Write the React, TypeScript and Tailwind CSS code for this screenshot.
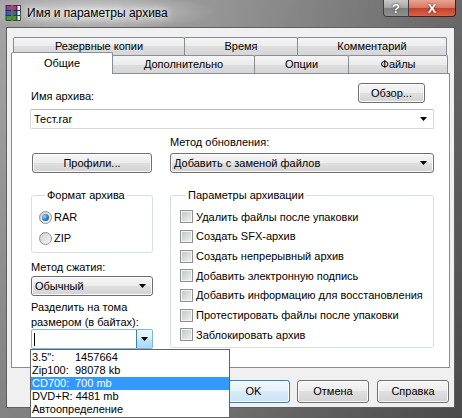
import type { ReactNode } from 'react';

const BTN_BG =
  'bg-[linear-gradient(#f6f6f6_0%,#ececec_50%,#dfdfdf_50%,#d3d3d3_100%)]';

function Arrow() {
  return (
    <svg width="7" height="4" viewBox="0 0 7 4" aria-hidden>
      <path d="M0 0H7L3.5 4Z" fill="#000" />
    </svg>
  );
}

function RarIcon() {
  // stacked books logo
  return (
    <svg width="17" height="18" viewBox="0 0 17 18" aria-hidden>
      <rect x="1" y="1.5" width="11" height="5" fill="#9b3c9a" stroke="#3a1a3a" strokeWidth="0.8" />
      <rect x="12" y="1.5" width="3.5" height="5" fill="#efe7cf" stroke="#3a1a3a" strokeWidth="0.8" />
      <rect x="1" y="6.5" width="11" height="5" fill="#2f63b6" stroke="#14284d" strokeWidth="0.8" />
      <rect x="12" y="6.5" width="3.5" height="5" fill="#efe7cf" stroke="#14284d" strokeWidth="0.8" />
      <rect x="1" y="11.5" width="11" height="5" fill="#3c9b45" stroke="#173d1b" strokeWidth="0.8" />
      <rect x="12" y="11.5" width="3.5" height="5" fill="#efe7cf" stroke="#173d1b" strokeWidth="0.8" />
      <rect x="6" y="1" width="2.5" height="16" fill="#8a6a2a" opacity="0.85" />
    </svg>
  );
}

function Button({
  children,
  className = '',
  primary = false,
}: {
  children: ReactNode;
  className?: string;
  primary?: boolean;
}) {
  return (
    <div
      className={`flex items-center justify-center rounded-[3px] border text-[11px] leading-none shadow-[inset_0_0_0_1px_rgba(255,255,255,0.85)] ${
        primary
          ? 'border-[#3c7fb1] bg-[linear-gradient(#f2f8fd_0%,#e6f2fb_50%,#d7ebf9_50%,#cbe4f6_100%)]'
          : `border-[#707070] ${BTN_BG}`
      } ${className}`}
    >
      {children}
    </div>
  );
}

function Select({ value, className = '' }: { value: string; className?: string }) {
  return (
    <div
      className={`flex h-[20px] items-center justify-between rounded-[3px] border border-[#707070] pl-[3px] pr-[6px] text-[11px] shadow-[inset_0_0_0_1px_rgba(255,255,255,0.85)] ${BTN_BG} ${className}`}
    >
      <span>{value}</span>
      <Arrow />
    </div>
  );
}

function Radio({ label, checked = false }: { label: string; checked?: boolean }) {
  return (
    <div className="flex h-[16px] items-center gap-[2px]">
      <span className="flex h-[13px] w-[13px] items-center justify-center rounded-full border border-[#8e8f8f] bg-[linear-gradient(135deg,#cfcfcf,#f7f7f7)]">
        {checked && (
          <span className="h-[7px] w-[7px] rounded-full bg-[radial-gradient(circle_at_35%_35%,#9ad6ff,#2a78bd_55%,#1a4b7c)]" />
        )}
      </span>
      <span>{label}</span>
    </div>
  );
}

function Check({ label }: { label: string }) {
  return (
    <div className="flex h-[19.7px] items-center gap-[3px]">
      <span className="flex h-[13px] w-[13px] items-center justify-center border border-[#8e8f8f] bg-[#f4f4f4]">
        <span className="h-[9px] w-[9px] bg-[linear-gradient(135deg,#c4c6c8,#eeeeee)]" />
      </span>
      <span>{label}</span>
    </div>
  );
}

const TAB =
  'flex h-[18px] items-center justify-center rounded-t-[2px] border border-b-0 border-[#898c95] bg-[linear-gradient(#f5f5f5,#ebebeb_50%,#dedede_50%,#d6d6d6)]';

export default function App() {
  return (
    <div className="relative flex h-[418px] w-[462px] flex-col overflow-hidden bg-[linear-gradient(180deg,transparent_0%,transparent_8%,rgba(0,0,0,0.18)_100%),linear-gradient(100deg,#a2a2a2_0%,#969696_40%,#727272_75%,#5a5a5a_100%)] font-['Liberation_Sans',Arial,sans-serif] text-black">
      {/* title bar */}
      <div className="flex h-[27px] items-start bg-[radial-gradient(ellipse_120px_20px_at_95px_12px,rgba(255,255,255,0.55),transparent)]">
        <div className="ml-[5px] mt-[4px]">
          <RarIcon />
        </div>
        <div className="ml-[5px] mt-[6px] text-[12px] leading-[14px] [text-shadow:0_0_6px_#fff,0_0_10px_#fff]">
          Имя и параметры архива
        </div>
        <div className="ml-auto mr-[6px] flex h-[17px]">
          <div className="flex w-[26px] items-center justify-center rounded-bl-[4px] border border-t-0 border-[#3d3d3d] bg-[linear-gradient(#c8c8c8,#a3a3a3_50%,#7e7e7e_50%,#909090)] text-[13px] font-bold leading-none text-white [text-shadow:0_0_2px_#222]">
            ?
          </div>
          <div className="flex w-[47px] items-center justify-center rounded-br-[4px] border border-l-0 border-t-0 border-[#4a1d16] bg-[linear-gradient(#e9a493,#d77562_50%,#c2402a_50%,#d5654a)] text-[13px] font-bold leading-none text-white [text-shadow:0_0_2px_#4a0a00]">
            X
          </div>
        </div>
      </div>

      <div className="flex">
        <div className="w-[6px]" />
        {/* client area */}
        <div className="flex h-[381px] w-[449px] flex-col border border-[#5f5f5f] bg-[#f0f0f0] px-[4px] pt-[9px] text-[11px]">
          {/* tabs */}
          <div className="ml-[2px] flex">
            <div className={`${TAB} w-[172px]`}>Резервные копии</div>
            <div className={`${TAB} -ml-px w-[114px]`}>Время</div>
            <div className={`${TAB} -ml-px w-[150px]`}>Комментарий</div>
          </div>
          <div className="flex h-[18px] items-end">
            <div className="relative z-10 -mb-px flex h-[22px] w-[102px] items-center justify-center rounded-t-[2px] border border-b-0 border-[#898c95] bg-white">
              Общие
            </div>
            <div className={`${TAB} -ml-px w-[143px]`}>Дополнительно</div>
            <div className={`${TAB} -ml-px w-[95px]`}>Опции</div>
            <div className={`${TAB} -ml-px w-[100px]`}>Файлы</div>
          </div>

          {/* tab page */}
          <div className="flex h-[295px] flex-col border border-[#898c95] bg-white pl-[19px] pr-[15px] pt-[9px]">
            <div className="flex h-[20px] items-end justify-between">
              <span className="leading-[14px]">Имя архива:</span>
              <Button className="mr-[9px] h-[20px] w-[67px]">Обзор...</Button>
            </div>
            <div className="-ml-px mt-[6px] flex h-[20px] items-center justify-between rounded-[2px] border border-[#d9d9d9] border-t-[#b5b8bd] bg-white pl-[3px] pr-[6px]">
              <span>Тест.rar</span>
              <Arrow />
            </div>

            <div className="flex justify-between">
              {/* left column */}
              <div className="flex w-[122px] flex-col">
                <Button className="ml-px mt-[24px] h-[20px] w-[120px]">Профили...</Button>
                <fieldset className="mt-[15px] h-[65px] rounded-[3px] border border-[#d5dfe5] pl-[7px]">
                  <legend className="ml-[6px] px-[2px] leading-[14px]">Формат архива</legend>
                  <div className="mt-[7px]">
                    <Radio label="RAR" checked />
                  </div>
                  <div className="mt-[5px]">
                    <Radio label="ZIP" />
                  </div>
                </fieldset>
                <span className="mt-[7px] leading-[14px]">Метод сжатия:</span>
                <Select value="Обычный" className="mt-[2px]" />
                <span className="mt-[4px] leading-[15px]">
                  Разделить на тома
                  <br />
                  размером (в байтах):
                </span>
                <div className="-mt-px flex h-[20px] rounded-[2px] border border-[#7eb4ea] bg-white">
                  <div className="flex flex-1 items-center pl-[2px]">
                    <span className="h-[13px] w-px bg-black" />
                  </div>
                  <div className="flex w-[16px] items-center justify-center border-l border-[#3c7fb1] bg-[linear-gradient(#eaf6fd,#d9f0fc_50%,#bee6fd_50%,#a7d9f5)]">
                    <Arrow />
                  </div>
                </div>
              </div>

              {/* right column */}
              <div className="flex w-[264px] flex-col">
                <span className="mt-[6px] leading-[14px]">Метод обновления:</span>
                <Select value="Добавить с заменой файлов" className="mt-[4px]" />
                <fieldset className="mt-[15px] h-[160px] rounded-[3px] border border-[#d5dfe5] pl-[9px]">
                  <legend className="ml-[6px] px-[2px] leading-[14px]">Параметры архивации</legend>
                  <div className="mt-[5px] flex flex-col">
                    <Check label="Удалить файлы после упаковки" />
                    <Check label="Создать SFX-архив" />
                    <Check label="Создать непрерывный архив" />
                    <Check label="Добавить электронную подпись" />
                    <Check label="Добавить информацию для восстановления" />
                    <Check label="Протестировать файлы после упаковки" />
                    <Check label="Заблокировать архив" />
                  </div>
                </fieldset>
              </div>
            </div>
          </div>

          {/* dialog buttons */}
          <div className="mr-px mt-[12px] flex justify-end gap-[7px]">
            <Button primary className="h-[23px] w-[73px]">
              OK
            </Button>
            <Button className="h-[23px] w-[72px]">Отмена</Button>
            <Button className="ml-px h-[23px] w-[72px]">Справка</Button>
          </div>
        </div>
        <div className="w-[7px]" />
      </div>

      {/* open drop-down list of the volume size combo */}
      <div className="absolute left-[30px] top-[349px] w-[200px] border border-[#646464] bg-white py-px text-[11px] leading-[13px]">
        <div className="flex pl-px">
          <span className="w-[43px]">3.5":</span>
          <span>1457664</span>
        </div>
        <div className="flex pl-px">
          <span className="w-[43px]">Zip100:</span>
          <span>98078 kb</span>
        </div>
        <div className="flex bg-[#3399ff] pl-px text-white">
          <span className="w-[43px]">CD700:</span>
          <span>700 mb</span>
        </div>
        <div className="pl-px">DVD+R: 4481 mb</div>
        <div className="pl-px">Автоопределение</div>
      </div>
    </div>
  );
}
